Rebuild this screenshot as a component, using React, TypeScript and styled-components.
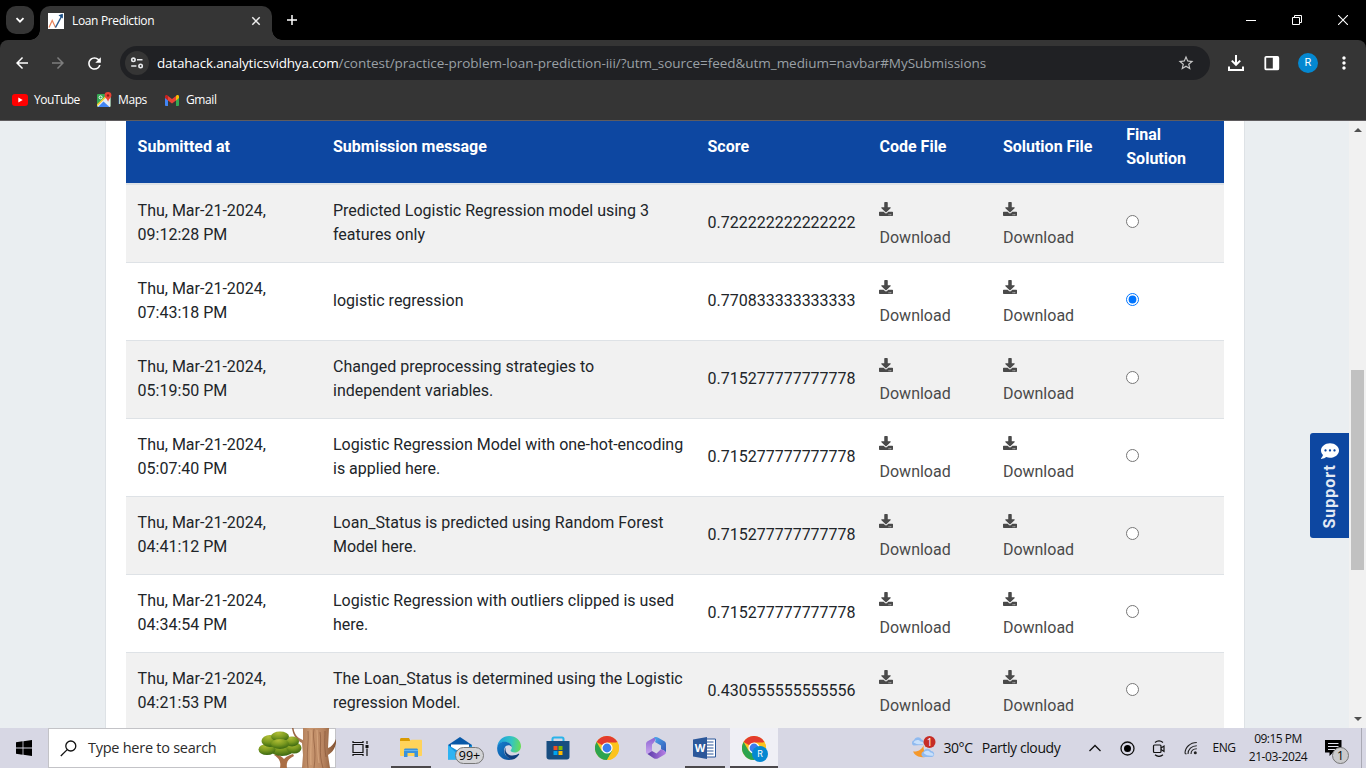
import React from 'react';
import styled, { createGlobalStyle } from 'styled-components';
import { FaDownload, FaCommentDots } from 'react-icons/fa';
import { MdArrowBack, MdArrowForward, MdRefresh, MdStarBorder, MdMoreVert } from 'react-icons/md';

const GlobalStyle = createGlobalStyle`
  *, *::before, *::after { box-sizing: border-box; }
  html, body { margin: 0; padding: 0; overflow: hidden; background: #000; }
  svg { display: block; flex: none; }
`;

const uiFont = `"Open Sans", "Noto Sans", sans-serif`;

const Screen = styled.div`
  width: 1366px;
  height: 768px;
  display: flex;
  flex-direction: column;
  overflow: hidden;
  font-family: ${uiFont};
`;

/* ---------- shared text ---------- */
const UiText = styled.span<{ $size: number; $spacing?: number; $color?: string; $gap?: number }>`
  font-size: ${p => p.$size}px;
  letter-spacing: ${p => p.$spacing ?? 0}px;
  color: ${p => p.$color ?? '#fff'};
  margin-left: ${p => p.$gap ?? 0}px;
  line-height: 18px;
  white-space: nowrap;
`;

/* ---------- tab strip ---------- */
const TabStrip = styled.div`
  height: 40px;
  flex: none;
  display: flex;
  background: #000;
`;
const TabSearch = styled.div`
  width: 28px;
  height: 28px;
  margin: 6px 0 0 6px;
  border-radius: 10px;
  background: #353535;
  display: flex;
  align-items: center;
  justify-content: center;
`;
const Tab = styled.div`
  width: 232px;
  height: 34px;
  margin: 6px 0 0 6px;
  padding: 0 11px 5px 8px;
  border-radius: 10px 10px 0 0;
  background: #353535;
  display: flex;
  align-items: center;
  position: relative;
  &::before, &::after {
    content: '';
    position: absolute;
    bottom: 0;
    width: 10px;
    height: 10px;
  }
  &::before {
    left: -10px;
    background: radial-gradient(circle at 0 0, transparent 9.5px, #353535 10px);
  }
  &::after {
    right: -10px;
    background: radial-gradient(circle at 100% 0, transparent 9.5px, #353535 10px);
  }
`;
const TabTitle = styled.div`
  flex: 1;
  display: flex;
`;
const NewTab = styled.div`
  margin: 14px 0 0 14px;
`;
const WindowButtons = styled.div`
  margin-left: auto;
  display: flex;
`;
const WindowButton = styled.div`
  width: 46px;
  height: 40px;
  display: flex;
  align-items: center;
  justify-content: center;
`;

/* ---------- toolbar ---------- */
const Chrome = styled.div`
  flex: none;
  height: 81px;
  background: #353535;
  border-radius: 8px 8px 0 0;
  border-bottom: 1px solid #5f5c5f;
`;
const ToolBar = styled.div`
  height: 46px;
  padding: 0 4px;
  display: flex;
  align-items: center;
`;
const ToolButton = styled.div<{ $dim?: boolean }>`
  width: 36px;
  flex: none;
  display: flex;
  justify-content: center;
  color: ${p => (p.$dim ? '#7d7d7d' : '#fff')};
`;
const Omnibox = styled.div`
  width: 1090px;
  flex: none;
  height: 34px;
  margin: 0 8px 0 8px;
  padding: 0 15px 0 5px;
  border-radius: 17px;
  background: #202124;
  display: flex;
  align-items: center;
`;
const SiteInfo = styled.div`
  width: 24px;
  height: 24px;
  border-radius: 50%;
  background: #353535;
  display: flex;
  align-items: center;
  justify-content: center;
  margin-right: 8px;
`;
const Url = styled.div`
  flex: 1;
  display: flex;
`;
const Avatar = styled.div`
  width: 20px;
  height: 20px;
  border-radius: 50%;
  background: #0488d1;
  color: #fff;
  font: 11px/20px Roboto, sans-serif;
  text-align: center;
`;
const BookmarkBar = styled.div`
  height: 28px;
  display: flex;
  align-items: center;
  padding-left: 12px;
`;
const Bookmark = styled.div<{ $width: number }>`
  width: ${p => p.$width}px;
  display: flex;
  align-items: center;
`;

/* ---------- page ---------- */
const Page = styled.main`
  height: 607px;
  flex: none;
  display: flex;
  background: #eaeef1;
  position: relative;
  overflow: hidden;
`;
const Content = styled.section`
  width: 1140px;
  margin-left: 105px;
  padding: 0 20px;
  background: #fff;
  border: solid #dee2e6;
  border-width: 0 1px;
  font-family: Roboto, sans-serif;
  font-size: 16px;
  line-height: 24px;
  color: #212529;
`;
const columns = '195.4px 374.5px 172px 123.4px 123.4px 1fr';
const HeaderRow = styled.div`
  height: 64px;
  display: grid;
  grid-template-columns: ${columns};
  background: #0d47a1;
  border-bottom: 2px solid #dee2e6;
  color: #fff;
  font-weight: 700;
`;
const HeaderCell = styled.div<{ $tall?: boolean }>`
  padding: ${p => (p.$tall ? 2 : 14)}px 36px 0 11.6px;
  white-space: ${p => (p.$tall ? 'normal' : 'nowrap')};
`;
const Row = styled.div<{ $striped: boolean; $first: boolean }>`
  height: ${p => (p.$first ? 77 : 78)}px;
  display: grid;
  grid-template-columns: ${columns};
  background: ${p => (p.$striped ? '#f1f1f1' : '#fff')};
  border-top: ${p => (p.$first ? '0' : '1px solid #dee2e6')};
`;
const Cell = styled.div<{ $top: number }>`
  padding: ${p => p.$top}px 0 0 11.6px;
  white-space: pre-line;
`;
const DownloadLink = styled.a`
  display: flex;
  flex-direction: column;
  gap: 10px;
  color: #4a4a4a;
`;
const Radio = styled.input`
  display: block;
  width: 13px;
  height: 13px;
  margin: 0;
`;
const Support = styled.div`
  position: absolute;
  top: 312px;
  right: 17px;
  width: 39px;
  height: 105px;
  padding: 9px 0;
  border-radius: 3px 0 0 3px;
  background: #0d47a1;
  color: #fff;
  display: flex;
  flex-direction: column;
  align-items: center;
  gap: 4px;
`;
const SupportLabel = styled.span`
  writing-mode: vertical-rl;
  transform: rotate(180deg);
  font: 700 16px/18px Roboto, sans-serif;
  letter-spacing: 1px;
  color: #e4eaf4;
`;
const ScrollTrack = styled.div`
  width: 17px;
  margin-left: auto;
  background: #f1f1f1;
  display: flex;
  flex-direction: column;
  align-items: center;
`;
const ScrollThumb = styled.div`
  width: 13px;
  height: 200px;
  margin: 238px 0 auto;
  background: #c1c1c1;
`;
const Arrow = styled.div<{ $down?: boolean }>`
  margin: ${p => (p.$down ? '0 0 7px' : '7px 0 0')};
  height: 4px;
  border: 4px solid transparent;
  border-top: ${p => (p.$down ? '4px solid #505050' : '0')};
  border-bottom: ${p => (p.$down ? '0' : '4px solid #505050')};
`;

/* ---------- taskbar ---------- */
const TaskBar = styled.footer`
  height: 40px;
  flex: none;
  display: flex;
  background: #d7d7e4;
`;
const StartButton = styled.div`
  width: 48px;
  display: flex;
  align-items: center;
  justify-content: center;
`;
const SearchBox = styled.div`
  width: 288px;
  border: 1px solid #c3c3c7;
  background: #fff;
  display: flex;
  align-items: center;
  padding-left: 11px;
`;
const SearchArt = styled.div`
  margin: 0 -1px 0 auto;
`;
const TaskButtons = styled.div`
  display: flex;
  gap: 1px;
  margin-left: 3px;
`;
const TaskButton = styled.div<{ $active?: boolean; $underline?: number }>`
  width: 48px;
  height: 40px;
  display: flex;
  align-items: center;
  justify-content: center;
  background: ${p => (p.$active ? '#efeff5' : 'transparent')};
  position: relative;
  &::after {
    content: '';
    position: absolute;
    bottom: 0;
    left: ${p => (48 - (p.$underline ?? 0)) / 2}px;
    width: ${p => p.$underline ?? 0}px;
    height: 2px;
    background: #4b484b;
  }
`;
const CountBadge = styled.span`
  position: absolute;
  left: 19px;
  top: 19px;
  width: 29px;
  height: 17px;
  border: 1px solid #777;
  border-radius: 9px;
  background: #d3d3d6;
  font: 12.5px/15px ${uiFont};
  text-align: center;
  color: #000;
`;
const ProfileBadge = styled.span`
  position: absolute;
  left: 22px;
  top: 18px;
  width: 16px;
  height: 16px;
  border-radius: 50%;
  background: #0488d1;
  color: #fff;
  font: 9px/16px Roboto, sans-serif;
  text-align: center;
`;
const Tray = styled.div`
  margin-left: auto;
  display: flex;
  align-items: center;
`;
const TrayItem = styled.div<{ $width: number; $gap?: number }>`
  width: ${p => p.$width}px;
  margin-left: ${p => p.$gap ?? 0}px;
  height: 40px;
  display: flex;
  align-items: center;
  justify-content: center;
`;
const Clock = styled.div`
  width: 74px;
  height: 40px;
  padding-top: 2px;
  display: flex;
  flex-direction: column;
  align-items: center;
`;
const Notifications = styled.div`
  width: 47px;
  height: 40px;
  padding: 12px 0 0 10px;
  position: relative;
  border-right: 1px solid #a9a9b4;
  margin-right: 4px;
`;
const NoticeCount = styled.span`
  position: absolute;
  left: 17px;
  top: 19px;
  width: 17px;
  height: 17px;
  border: 1px solid #777;
  border-radius: 50%;
  background: #cacacc;
  font: 12px/15px ${uiFont};
  text-align: center;
  color: #000;
`;

/* ---------- drawings ---------- */
const Favicon = () => (
  <svg width="16" height="16" viewBox="0 0 16 16">
    <rect width="16" height="16" fill="#fff" />
    <path d="M1 14.5 4.2 7.5 7.5 14.5" fill="none" stroke="#e8845c" strokeWidth="1.2" />
    <path d="M7.5 14.5 14 2.5" fill="none" stroke="#2a5a8c" strokeWidth="1.5" />
    <path d="M10.5 2.2 14.8.8v4.6z" fill="#174b82" />
  </svg>
);
const SiteInfoIcon = () => (
  <svg width="14" height="14" viewBox="0 0 14 14" fill="none" stroke="#e8eaed" strokeWidth="1.6">
    <circle cx="3.4" cy="3.8" r="1.7" /><path d="M7 3.8h5.5M1.2 10h5.2" /><circle cx="10.6" cy="10" r="1.7" />
  </svg>
);
const DownloadTray = () => (
  <svg width="18" height="18" viewBox="0 0 18 18" fill="none" stroke="#fff" strokeWidth="2">
    <path d="M9 1v9M4.8 6.6 9 10.8l4.2-4.2M2 12.5V16h14v-3.5" />
  </svg>
);
const SidePanel = () => (
  <svg width="16" height="16" viewBox="0 0 16 16">
    <rect x="1.3" y="1.8" width="13" height="12.6" rx="1" fill="none" stroke="#fff" strokeWidth="1.8" />
    <path d="M8.8 1.8h5.6v12.6H8.8z" fill="#fff" />
  </svg>
);
const YouTubeLogo = () => (
  <svg width="16" height="12" viewBox="0 0 16 12">
    <rect width="16" height="12" rx="3" fill="#f00" /><path d="M6.3 3.4v5.2L10.7 6z" fill="#fff" />
  </svg>
);
const MapsLogo = () => (
  <svg width="16" height="16" viewBox="0 0 16 16">
    <rect y="2" width="13.500" height="13" rx="1" fill="#34a853" />
    <path d="M0 13.500 11 3l2.500 2v9a1 1 0 0 1-1 1H1z" fill="#e9ecef" />
    <path d="M1 15l5.500-5.500L12.500 15z" fill="#4285f4" />
    <path d="M0 12.200v2L11.300 3.600 10 2.400z" fill="#fbcf33" />
    <circle cx="3.600" cy="5.400" r="1.500" fill="none" stroke="#fff" />
    <path d="M11 0a3.400 3.400 0 0 1 3.400 3.500c0 2.400-2.600 3-3.300 6.300-.8-3.300-3.500-3.900-3.500-6.300A3.400 3.400 0 0 1 11 0z" fill="#ea4335" />
    <circle cx="11" cy="3.500" r="1.200" fill="#8c1d14" />
  </svg>
);
const GmailLogo = () => (
  <svg width="14" height="11" viewBox="0 0 14 11">
    <path d="M0 2v8.200c0 .4.4.8.8.8H3V4.500z" fill="#4285f4" />
    <path d="M14 2v8.200c0 .4-.4.8-.8.8H11V4.500z" fill="#34a853" />
    <path d="M11 1v4.400l3-2.300V1.500C14 .1 12.500-.4 11.400.5z" fill="#fbbc04" />
    <path d="M3 5.400V1l4 3 4-3v4.400l-4 3z" fill="#ea4335" />
    <path d="M0 1.500v1.600l3 2.300V1L2.600.5C1.500-.4 0 .1 0 1.500z" fill="#c5221f" />
  </svg>
);
const WindowsLogo = () => (
  <svg width="16" height="16" viewBox="0 0 16 16" fill="#000">
    <path d="M0 2.300 6.600 1.300v6.300H0zM7.400 1.200 16 0v7.600H7.400zM0 8.400h6.600v6.300L0 13.700zM7.400 8.400H16V16l-8.600-1.200z" />
  </svg>
);
const SearchGlass = () => (
  <svg width="17" height="17" viewBox="0 0 17 17" fill="none" stroke="#111" strokeWidth="1.3">
    <circle cx="10.800" cy="6" r="5" /><path d="M7.200 9.600.8 16" />
  </svg>
);
const TreeArt = () => (
  <svg width="78" height="40" viewBox="0 0 78 40">
    <defs>
      <linearGradient id="bark" x1="0" x2="1">
        <stop offset="0" stopColor="#94603f" /><stop offset=".4" stopColor="#c8966f" />
        <stop offset=".7" stopColor="#b98561" /><stop offset="1" stopColor="#80502f" />
      </linearGradient>
      <radialGradient id="leaf" cx=".4" cy=".15" r=".9">
        <stop offset="0" stopColor="#b0bd35" /><stop offset=".5" stopColor="#7b9a20" /><stop offset="1" stopColor="#33610f" />
      </radialGradient>
    </defs>
    <path d="M22 40c1-6 0-9-6-13l2-1c4 1 6 3 8 5 3-3 6-4 9-5l1 2c-6 3-8 6-7 12z" fill="#aa6e45" />
    <path d="M34 0c1 7 4 12 10 15l1 12-1 13h28l-2-13c5-3 7-7 8-12v-4c-2 5-5 8-8 9L71 0H45v12C39 10 36 5 35.500 0z" fill="url(#bark)" />
    <path d="M50 3c1 13-2 20 0 37M56 1c-2 11 3 19 0 39M62 4c2 11-2 20 3 36M67 3c0 10-1 14 1 26" fill="none" stroke="#744329" strokeWidth="1" opacity=".45" />
    <path d="M53 2c1 12-1 20 0 35M59 2c1 12 0 20 2 33" fill="none" stroke="#dfb088" strokeWidth="1.200" opacity=".6" />
    <g fill="url(#leaf)">
      <ellipse cx="24" cy="21" rx="12" ry="7" /><ellipse cx="9" cy="21.500" rx="8.500" ry="5.500" />
      <ellipse cx="36" cy="20" rx="7.500" ry="5.500" /><ellipse cx="12" cy="13" rx="8.500" ry="6" />
      <ellipse cx="34" cy="13.500" rx="7" ry="5" /><ellipse cx="22" cy="8.500" rx="9" ry="5" />
      <ellipse cx="22" cy="16" rx="9" ry="5" />
    </g>
  </svg>
);
const TaskView = () => (
  <svg width="17" height="17" viewBox="0 0 17 17" fill="none" stroke="#111" strokeWidth="1.200">
    <path d="M1 4.500h10v8H1zM1 1v1.500h10V1M1 16v-1.500h10V16M15 1v3M15 8.500V16" /><rect x="13.500" y="5" width="3" height="3" fill="#111" stroke="none" />
  </svg>
);
const FolderIcon = () => (
  <svg width="22" height="20" viewBox="0 0 22 20">
    <path d="M0 1.500C0 .7.6 0 1.400 0H9l1.500 3H0z" fill="#d99a00" />
    <path d="M0 3h9.500l2-1.200H21c.6 0 1 .4 1 1V17c0 .6-.4 1-1 1H1c-.6 0-1-.4-1-1z" fill="#ffd35a" />
    <path d="M4 19v-7c0-.9.600-1.500 1.500-1.500h11c.9 0 1.500.600 1.500 1.500v7h-3.500v-4h-7v4z" fill="#3a92dc" />
    <path d="M4 12.500h14" stroke="#64b4f1" strokeWidth="1" />
  </svg>
);
const MailIcon = () => (
  <svg width="24" height="23" viewBox="0 0 24 23">
    <path d="M0 8 12 0l12 8v14H0z" fill="#0758a8" /><path d="M3 7.500h18V15H3z" fill="#fff" />
    <path d="M0 8v14.500h24V8L12 15z" fill="#1595e0" /><path d="M0 22.500V8l15 14.500z" fill="#2eb3f2" />
  </svg>
);
const EdgeIcon = () => (
  <svg width="24" height="24" viewBox="0 0 24 24">
    <defs>
      <linearGradient id="edgeTop" x1="0" y1=".4" x2="1" y2=".5"><stop stopColor="#1b9de2" /><stop offset=".6" stopColor="#35c5c0" /><stop offset="1" stopColor="#68dc57" /></linearGradient>
      <linearGradient id="edgeLow" x1="0" y1="0" x2="1" y2="1"><stop stopColor="#1580d0" /><stop offset="1" stopColor="#0b4a93" /></linearGradient>
    </defs>
    <path d="M.2 11C.8 4.600 6 0 12.200 0 19 0 24 4.800 24 10.200c0 3.800-2.800 6.300-6.200 6.300-3 0-4.200-1.200-4.200-2 0-.6 1.300-1.200 1.300-3.200C14.900 8.200 11 6 7.500 6 3.500 6 .8 8.500.2 11z" fill="url(#edgeTop)" />
    <path d="M.2 11.500C.7 8 3.500 5.800 7.200 5.800c4 0 7.700 2.200 7.700 5.400-1-1.400-2.200-1.900-3.500-1.900-3.200 0-4.200 3-4.200 5.400 0 4.600 4.500 7.700 8.300 8.600-1 .5-2.300.7-3.500.7C5 24-.5 18.500.2 11.500z" fill="url(#edgeLow)" />
    <path d="M9 11.200c-1.800 4 1.400 8.300 6.400 8.300 2.500 0 4.500-.800 6-1.700.5-.3 1 .1.700.7-1.500 2.700-4 4.500-6.600 5C9.500 22.500 5.200 15.800 9 11.200z" fill="#103f7d" />
  </svg>
);
const StoreIcon = () => (
  <svg width="24" height="24" viewBox="0 0 24 24">
    <path d="M6.500 6V3c0-.9.6-1.500 1.500-1.500h8c.9 0 1.500.6 1.500 1.500v3" fill="none" stroke="#2ab4ea" strokeWidth="2" />
    <path d="M.5 5h23v16c0 1.500-1 2.500-2.500 2.500H3C1.500 23.500.5 22.500.5 21z" fill="#174d80" />
    <path d="M7.500 10h4v4h-4z" fill="#f25022" /><path d="M12.500 10h4v4h-4z" fill="#7fba00" /><path d="M7.500 15h4v4h-4z" fill="#00a4ef" /><path d="M12.500 15h4v4h-4z" fill="#ffb900" />
  </svg>
);
const ChromeIcon = () => (
  <svg width="24" height="24" viewBox="0 0 24 24">
    <circle cx="12" cy="12" r="12" fill="#fcc31e" />
    <path d="M12 12 1.600 6a12 12 0 0 1 20.800 0z" fill="#e33b2e" />
    <path d="M1.600 6a12 12 0 0 0 10.400 18l5.200-9L12 12 6.800 15z" fill="#2da44e" />
    <path d="M12 6.500h10.700A12 12 0 0 1 12 24l5.200-9z" fill="#fcc31e" />
    <circle cx="12" cy="12" r="5.600" fill="#fff" /><circle cx="12" cy="12" r="4.400" fill="#3b7ded" />
  </svg>
);
const OfficeIcon = () => (
  <svg width="22" height="24" viewBox="0 0 22 24">
    <defs>
      <linearGradient id="offA" x1="0" y1="0" x2="0" y2="1"><stop stopColor="#8d63d2" /><stop offset="1" stopColor="#c8a5ee" /></linearGradient>
      <linearGradient id="offB" x1="0" y1="0" x2="1" y2="1"><stop stopColor="#4ca8ec" /><stop offset="1" stopColor="#3356b5" /></linearGradient>
      <linearGradient id="offC" x1="0" x2="1"><stop stopColor="#5a3ba8" /><stop offset="1" stopColor="#b880e6" /></linearGradient>
    </defs>
    <path d="M9.500 1.500C11 3 10 6 7 8.500V15L2.500 18C1.500 17.600 1 17 1 16V8c0-1.300.6-2.200 1.600-2.800z" fill="url(#offA)" />
    <path d="M9 1.500c1.500-.8 3-.6 4.300.2l6 3.500c1.200.7 1.700 1.700 1.700 3v8c-1-1.200-2.600-2.200-5-3V9.500L10 6c1-1.500.7-3-1-4.500z" fill="url(#offB)" />
    <path d="m2.500 18 4.500-3 4.500 2.500 4.500-4.300c2.800 1 4.600 2.200 5 3.400-.2 1-.8 1.600-1.800 2.200l-6 3.400c-1.500.8-3 .8-4.500 0z" fill="url(#offC)" />
  </svg>
);
const WordIcon = () => (
  <svg width="24" height="22" viewBox="0 0 24 22">
    <path d="M12 2h10.500v18H12z" fill="#fff" stroke="#2b579a" />
    <path d="M14 5h6.500M14 8h6.500M14 11h6.500M14 14h6.500M14 17h6.500" stroke="#2b579a" strokeWidth="1.200" />
    <path d="M0 2.500 14 0v22L0 19.500z" fill="#2b579a" />
    <text x="7" y="15" fontFamily="Open Sans" fontWeight="700" fontSize="11" fill="#fff" textAnchor="middle">W</text>
  </svg>
);
const WeatherIcon = () => (
  <svg width="26" height="24" viewBox="0 0 26 24">
    <path d="M2 15.500a10 9 0 0 0 17 2.500c-5 .5-7.500-4-6-9.500-1.500 4.500-5.500 7.500-11 7z" fill="#f5982a" />
    <path d="M2.500 9.500a2.800 2.800 0 0 1 .5-5.200C4 .5 9 0 10.500 3.500c2.500.5 3 4 1 5.500z" fill="#8fbaf0" />
    <path d="M2.500 6.500c2-3 5-3 7-1 2 0 3.500 1 3 2.500-3 .5-7 .5-10-1.500z" fill="#c8e0fb" />
    <path d="M12 21a3 3 0 0 1 .5-5.500c1-3.500 6-3.500 7.500-.5 3.500 0 4.500 5 1 6z" fill="#8fbaf0" />
    <path d="M12.500 17c1.500-3 5.500-3 7-.5 2 .2 3.500 1.500 3 3-3 .5-7 .300-10-2.500z" fill="#c8e0fb" />
    <circle cx="18.500" cy="6" r="6" fill="#c62d26" />
    <text x="18.500" y="9.500" fontFamily="Open Sans" fontSize="10" fill="#fff" textAnchor="middle">1</text>
  </svg>
);
const CameraIcon = () => (
  <svg width="14" height="17" viewBox="0 0 14 17" fill="none" stroke="#111" strokeWidth="1.200">
    <rect x="1.500" y="5" width="7.500" height="7.500" rx="1" /><path d="M9 8l3-2v5.500l-3-2M3 2.500c2.500-2 5.500-2 8 0M3 14.800c2.500 2 5.500 2 8 0" />
  </svg>
);
const WifiIcon = () => (
  <svg width="14" height="14" viewBox="0 0 14 14" fill="none" stroke="#222" strokeWidth="1.100">
    <path d="M1 12.500C1 6.500 6 1.500 12.800 1.500M4 13c0-4.500 3.500-8.300 8.800-8.300M7 13c0-3 2.300-5.200 5.800-5.200" /><path d="M1 12.500 2.500 13" /><circle cx="11.300" cy="11.800" r="1.500" fill="#222" stroke="none" />
  </svg>
);
const NoticeIcon = () => (
  <svg width="17" height="17" viewBox="0 0 17 17">
    <path d="M0 0h16.500v12.500H8L4.500 16v-3.500H0z" fill="#000" /><path d="M3 3.500h10.500M3 6.500h10.500M3 9.500h7" stroke="#e2e2ee" />
  </svg>
);

/* ---------- data ---------- */
const submissions = [
  { time: '09:12:28 PM', message: 'Predicted Logistic Regression model using 3\nfeatures only', score: '0.722222222222222' },
  { time: '07:43:18 PM', message: 'logistic regression', score: '0.770833333333333', final: true },
  { time: '05:19:50 PM', message: 'Changed preprocessing strategies to\nindependent variables.', score: '0.715277777777778' },
  { time: '05:07:40 PM', message: 'Logistic Regression Model with one-hot-encoding\nis applied here.', score: '0.715277777777778' },
  { time: '04:41:12 PM', message: 'Loan_Status is predicted using Random Forest\nModel here.', score: '0.715277777777778' },
  { time: '04:34:54 PM', message: 'Logistic Regression with outliers clipped is used\nhere.', score: '0.715277777777778' },
  { time: '04:21:53 PM', message: 'The Loan_Status is determined using the Logistic\nregression Model.', score: '0.430555555555556' },
];

const Download = () => (
  <Cell $top={17}>
    <DownloadLink>
      <FaDownload size={14} />
      <span>Download</span>
    </DownloadLink>
  </Cell>
);

export default function App() {
  return (
    <Screen>
      <GlobalStyle />
      <TabStrip>
        <TabSearch>
          <svg width="10" height="10" viewBox="0 0 10 10" fill="none" stroke="#fff" strokeWidth="1.800"><path d="m1.500 3.200 3.500 3.500 3.500-3.500" /></svg>
        </TabSearch>
        <Tab>
          <Favicon />
          <TabTitle><UiText $size={12} $spacing={-0.35} $gap={8}>Loan Prediction</UiText></TabTitle>
          <svg width="10" height="10" viewBox="0 0 10 10" stroke="#eee" strokeWidth="1.500"><path d="m1.300 1.300 7.400 7.400M8.700 1.300 1.300 8.700" /></svg>
        </Tab>
        <NewTab>
          <svg width="12" height="12" viewBox="0 0 12 12" stroke="#fff" strokeWidth="1.500"><path d="M6 1v10M1 6h10" /></svg>
        </NewTab>
        <WindowButtons>
          <WindowButton><svg width="10" height="10" viewBox="0 0 10 10" stroke="#fff"><path d="M0 5.500h10" /></svg></WindowButton>
          <WindowButton><svg width="10" height="10" viewBox="0 0 10 10" fill="none" stroke="#fff"><path d="M.5 2.500h7v7h-7zM2.500 2.500v-2h7v7h-2" /></svg></WindowButton>
          <WindowButton><svg width="10" height="10" viewBox="0 0 10 10" stroke="#fff" strokeWidth="1.100"><path d="m0 0 10 10M10 0 0 10" /></svg></WindowButton>
        </WindowButtons>
      </TabStrip>
      <Chrome>
        <ToolBar>
          <ToolButton><MdArrowBack size={18} /></ToolButton>
          <ToolButton $dim><MdArrowForward size={18} /></ToolButton>
          <ToolButton><MdRefresh size={19} /></ToolButton>
          <Omnibox>
            <SiteInfo><SiteInfoIcon /></SiteInfo>
            <Url>
              <UiText $size={13.5} $spacing={-0.2}>datahack.analyticsvidhya.com</UiText>
              <UiText $size={13.5} $spacing={-0.04} $color="#9aa0a6">/contest/practice-problem-loan-prediction-iii/?utm_source=feed&amp;utm_medium=navbar#MySubmissions</UiText>
            </Url>
            <MdStarBorder size={18} color="#c7c7c7" />
          </Omnibox>
          <ToolButton><DownloadTray /></ToolButton>
          <ToolButton><SidePanel /></ToolButton>
          <ToolButton><Avatar>R</Avatar></ToolButton>
          <ToolButton><MdMoreVert size={20} /></ToolButton>
        </ToolBar>
        <BookmarkBar>
          <Bookmark $width={85}><YouTubeLogo /><UiText $size={12} $spacing={-0.5} $gap={6}>YouTube</UiText></Bookmark>
          <Bookmark $width={68}><MapsLogo /><UiText $size={12} $spacing={-0.4} $gap={5}>Maps</UiText></Bookmark>
          <Bookmark $width={60}><GmailLogo /><UiText $size={12} $spacing={-0.4} $gap={7}>Gmail</UiText></Bookmark>
        </BookmarkBar>
      </Chrome>
      <Page>
        <Content>
          <HeaderRow>
            <HeaderCell>Submitted at</HeaderCell>
            <HeaderCell>Submission message</HeaderCell>
            <HeaderCell>Score</HeaderCell>
            <HeaderCell>Code File</HeaderCell>
            <HeaderCell>Solution File</HeaderCell>
            <HeaderCell $tall>Final Solution</HeaderCell>
          </HeaderRow>
          {submissions.map((s, i) => (
            <Row key={s.time} $striped={i % 2 === 0} $first={i === 0}>
              <Cell $top={14}>{`Thu, Mar-21-2024,\n${s.time}`}</Cell>
              <Cell $top={s.message.includes('\n') ? 14 : 26}>{s.message}</Cell>
              <Cell $top={26}>{s.score}</Cell>
              <Download />
              <Download />
              <Cell $top={30}><Radio type="radio" name="final" defaultChecked={!!s.final} /></Cell>
            </Row>
          ))}
        </Content>
        <ScrollTrack>
          <Arrow />
          <ScrollThumb />
          <Arrow $down />
        </ScrollTrack>
        <Support>
          <FaCommentDots size={18} />
          <SupportLabel>Support</SupportLabel>
        </Support>
      </Page>
      <TaskBar>
        <StartButton><WindowsLogo /></StartButton>
        <SearchBox>
          <SearchGlass />
          <UiText $size={14.5} $spacing={-0.26} $color="#2b2b2b" $gap={11}>Type here to search</UiText>
          <SearchArt><TreeArt /></SearchArt>
        </SearchBox>
        <TaskButton><TaskView /></TaskButton>
        <TaskButtons>
          <TaskButton $underline={40}><FolderIcon /></TaskButton>
          <TaskButton><MailIcon /><CountBadge>99+</CountBadge></TaskButton>
          <TaskButton><EdgeIcon /></TaskButton>
          <TaskButton><StoreIcon /></TaskButton>
          <TaskButton><ChromeIcon /></TaskButton>
          <TaskButton><OfficeIcon /></TaskButton>
          <TaskButton $underline={40}><WordIcon /></TaskButton>
          <TaskButton $active $underline={48}><ChromeIcon /><ProfileBadge>R</ProfileBadge></TaskButton>
        </TaskButtons>
        <Tray>
          <TrayItem $width={27}><WeatherIcon /></TrayItem>
          <TrayItem $width={42}><UiText $size={14} $spacing={-0.4} $color="#111">30°C</UiText></TrayItem>
          <TrayItem $width={84}><UiText $size={14} $spacing={-0.4} $color="#111">Partly cloudy</UiText></TrayItem>
          <TrayItem $width={32} $gap={16}><svg width="12" height="8" viewBox="0 0 12 8" fill="none" stroke="#111" strokeWidth="1.300"><path d="m.5 7 5.500-5.500L11.500 7" /></svg></TrayItem>
          <TrayItem $width={32}><svg width="15" height="15" viewBox="0 0 15 15"><circle cx="7.500" cy="7.500" r="6.500" fill="none" stroke="#111" strokeWidth="1.300" /><circle cx="7.500" cy="7.500" r="3.500" /></svg></TrayItem>
          <TrayItem $width={32}><CameraIcon /></TrayItem>
          <TrayItem $width={32}><WifiIcon /></TrayItem>
          <TrayItem $width={34}><UiText $size={12} $spacing={-0.5} $color="#111">ENG</UiText></TrayItem>
          <Clock>
            <UiText $size={12} $spacing={-0.5} $color="#111">09:15 PM</UiText>
            <UiText $size={12} $spacing={-0.4} $color="#111">21-03-2024</UiText>
          </Clock>
          <Notifications><NoticeIcon /><NoticeCount>1</NoticeCount></Notifications>
        </Tray>
      </TaskBar>
    </Screen>
  );
}
